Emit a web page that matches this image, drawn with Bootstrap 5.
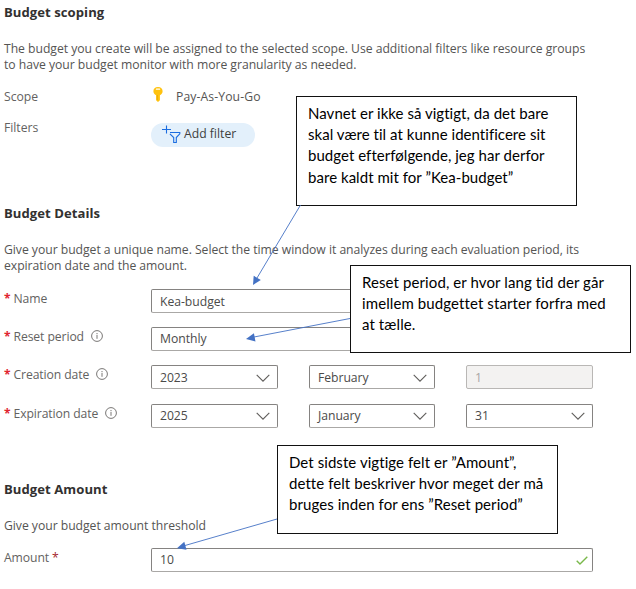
<!DOCTYPE html>
<html lang="da">
<head>
<meta charset="utf-8">
<meta name="viewport" content="width=device-width, initial-scale=1">
<title>Budget</title>
<link href="https://cdn.jsdelivr.net/npm/bootstrap@5.3.0/dist/css/bootstrap.min.css" rel="stylesheet">
<style>
body{width:636px;height:589px;overflow:hidden;background:#fff;color:#555453;font:12.2px/16.5px "Open Sans","Noto Sans",sans-serif;letter-spacing:-.035px}
.page{width:593px;padding-left:4px}
.page h2{font-size:13.1px;line-height:17px;font-weight:700;color:#323130;margin-bottom:19.5px;letter-spacing:.05px}
.intro{height:33px;white-space:nowrap}
.field-row{height:38.4px}
.form-label{color:#636261}
.field-row .form-label,.scope-row .form-label,.filter-row .form-label{flex:0 0 147px;width:147px;height:19px;line-height:19px;white-space:nowrap}
.field-row .form-label{letter-spacing:-.1px}
.scope-row{height:31px;margin-top:13.5px;line-height:19px}
.scope-value{gap:13px;padding-left:2px;letter-spacing:.1px}
.filter-row{height:24px}
.fields{padding-top:14px}
.field{height:24px;border:1px solid #858381;border-bottom-color:#aaa8a6;border-radius:2px;padding:1px 7px 0 8px;font:inherit;letter-spacing:inherit;color:#4b4a49}
.field-checked{padding-right:4px}
.field:disabled{background:#f3f2f1;border-color:#b9b7b5;color:#a8a6a4}
.date-grid{display:grid;grid-template-columns:127px 126px 127px;column-gap:31px}
.req{color:#e02530;font-weight:700;width:9.5px;font-size:12px}
.req-end{color:#a4262c}
.info{margin:3px 0 0 7px}
.pill{background:#e3f0fb;color:#403f3e;width:104px;height:24px;margin-top:4.5px;padding:0 0 0 11px;font:inherit;border:0;gap:3px}
.sec-details{margin-top:63px}
.sec-amount{margin-top:39px}
.amount-intro{margin-bottom:13.5px}
.callout{position:absolute;width:281px;background:#fff;border:1.5px solid #111;padding:6px 0 0 11px;color:#000;font:15px/21.2px Lato,sans-serif;letter-spacing:.1px;font-variant-ligatures:none;white-space:nowrap}
.callout-name{left:296px;top:96px;height:110px;letter-spacing:.04px}
.callout-period{left:350px;top:265px;height:88px}
.callout-amount{left:277px;top:445px;height:89px;letter-spacing:.07px}
.arrows{position:absolute;left:0;top:0}
</style>
<script src="https://cdn.jsdelivr.net/npm/bootstrap@5.3.0/dist/js/bootstrap.bundle.min.js"></script>
</head>
<body class="position-relative">
<svg width="0" height="0" class="position-absolute">
  <symbol id="info" viewBox="0 0 12 12"><circle cx="6" cy="6" r="5.4" fill="none" stroke="#797775"/><path d="M6 5v3.8M6 3v1.2" stroke="#797775"/></symbol>
  <symbol id="chev" viewBox="0 0 14 8"><path d="M.7.8 7 7.1 13.3.8" fill="none" stroke="#605e5c" stroke-width="1.1"/></symbol>
</svg>
<main class="page">
  <section class="pt-1">
    <h2>Budget scoping</h2>
    <p class="intro mb-0">The budget you create will be assigned to the selected scope. Use additional filters like resource groups<br>to have your budget monitor with more granularity as needed.</p>
    <div class="scope-row d-flex">
      <div class="form-label mb-0">Scope</div>
      <div class="scope-value d-flex"><svg width="10" height="15" viewBox="0 0 10 15"><path d="M5 0C2 0 .4 1.8.4 4.3c0 1.8 1 3 2.7 3.9v5L5 15l1.9-1.8V8.2C8.6 7.3 9.6 6.1 9.6 4.3 9.6 1.8 8 0 5 0Z" fill="#ffc20e"/><path d="M3.4 2.2h3.2" stroke="#fff" stroke-width="1.2" stroke-linecap="round"/><path d="M4.3 8v5" stroke="#e6a300" stroke-width=".8"/></svg><span>Pay-As-You-Go</span></div>
    </div>
    <div class="filter-row d-flex">
      <div class="form-label mb-0">Filters</div>
      <button class="btn pill rounded-pill d-flex align-items-center"><svg width="19" height="19" viewBox="0 0 19 19" fill="none" stroke="#1a6ce0" stroke-width="1.1"><path d="M4.5.5v8M0 4.500h9M8 7.5h9.8v1.3L14.3 12.5v5h-2.6v-5L7.900 8.8"/></svg><span>Add filter</span></button>
    </div>
  </section>
  <section class="sec-details">
    <h2>Budget Details</h2>
    <p class="intro mb-0">Give your budget a unique name. Select the time window it analyzes during each evaluation period, its<br>expiration date and the amount.</p>
    <div class="fields">
      <div class="field-row d-flex"><label class="form-label d-flex mb-0"><span class="req">*</span>Name</label><input class="field w-100" value="Kea-budget"></div>
      <div class="field-row d-flex"><label class="form-label d-flex mb-0"><span class="req">*</span>Reset period<svg class="info" width="12" height="12"><use href="#info"/></svg></label><div class="field w-100 d-flex align-items-center">Monthly</div></div>
      <div class="field-row d-flex"><label class="form-label d-flex mb-0"><span class="req">*</span>Creation date<svg class="info" width="12" height="12"><use href="#info"/></svg></label>
        <div class="date-grid"><div class="field d-flex align-items-center justify-content-between">2023<svg width="14" height="8"><use href="#chev"/></svg></div><div class="field d-flex align-items-center justify-content-between">February<svg width="14" height="8"><use href="#chev"/></svg></div><input class="field w-100" value="1" disabled></div></div>
      <div class="field-row d-flex"><label class="form-label d-flex mb-0"><span class="req">*</span>Expiration date<svg class="info" width="12" height="12"><use href="#info"/></svg></label>
        <div class="date-grid"><div class="field d-flex align-items-center justify-content-between">2025<svg width="14" height="8"><use href="#chev"/></svg></div><div class="field d-flex align-items-center justify-content-between">January<svg width="14" height="8"><use href="#chev"/></svg></div><div class="field d-flex align-items-center justify-content-between">31<svg width="14" height="8"><use href="#chev"/></svg></div></div></div>
    </div>
  </section>
  <section class="sec-amount">
    <h2>Budget Amount</h2>
    <p class="amount-intro">Give your budget amount threshold</p>
    <div class="field-row d-flex"><label class="form-label mb-0">Amount <span class="req-end">*</span></label><div class="field field-checked w-100 d-flex align-items-center justify-content-between">10<svg width="12" height="9" viewBox="0 0 12 9"><path d="M.7 4.8 4 8 11.3.8" fill="none" stroke="#79b84a" stroke-width="1.4"/></svg></div></div>
  </section>
</main>
<div class="callout callout-name">Navnet er ikke så vigtigt, da det bare<br>skal være til at kunne identificere sit<br>budget efterfølgende, jeg har derfor<br>bare kaldt mit for ”Kea-budget”</div>
<div class="callout callout-period">Reset period, er hvor lang tid der går<br>imellem budgettet starter forfra med<br>at tælle.</div>
<div class="callout callout-amount">Det sidste vigtige felt er ”Amount”,<br>dette felt beskriver hvor meget der må<br>bruges inden for ens ”Reset period”</div>
<svg class="arrows" width="636" height="589" stroke="#4472c4" stroke-width=".9" fill="#4472c4"><path d="M300.5 205 257 278M350 318.5 254 337M277 519 185 545.5" fill="none"/><path d="M253 285 253.7 275.7 260.8 280Z" stroke="none"/><path d="M246 339 253.9 333.3 255.5 341.6Z" stroke="none"/><path d="M177 548.3 184.3 541.8 186.5 549.8Z" stroke="none"/></svg>
</body>
</html>
